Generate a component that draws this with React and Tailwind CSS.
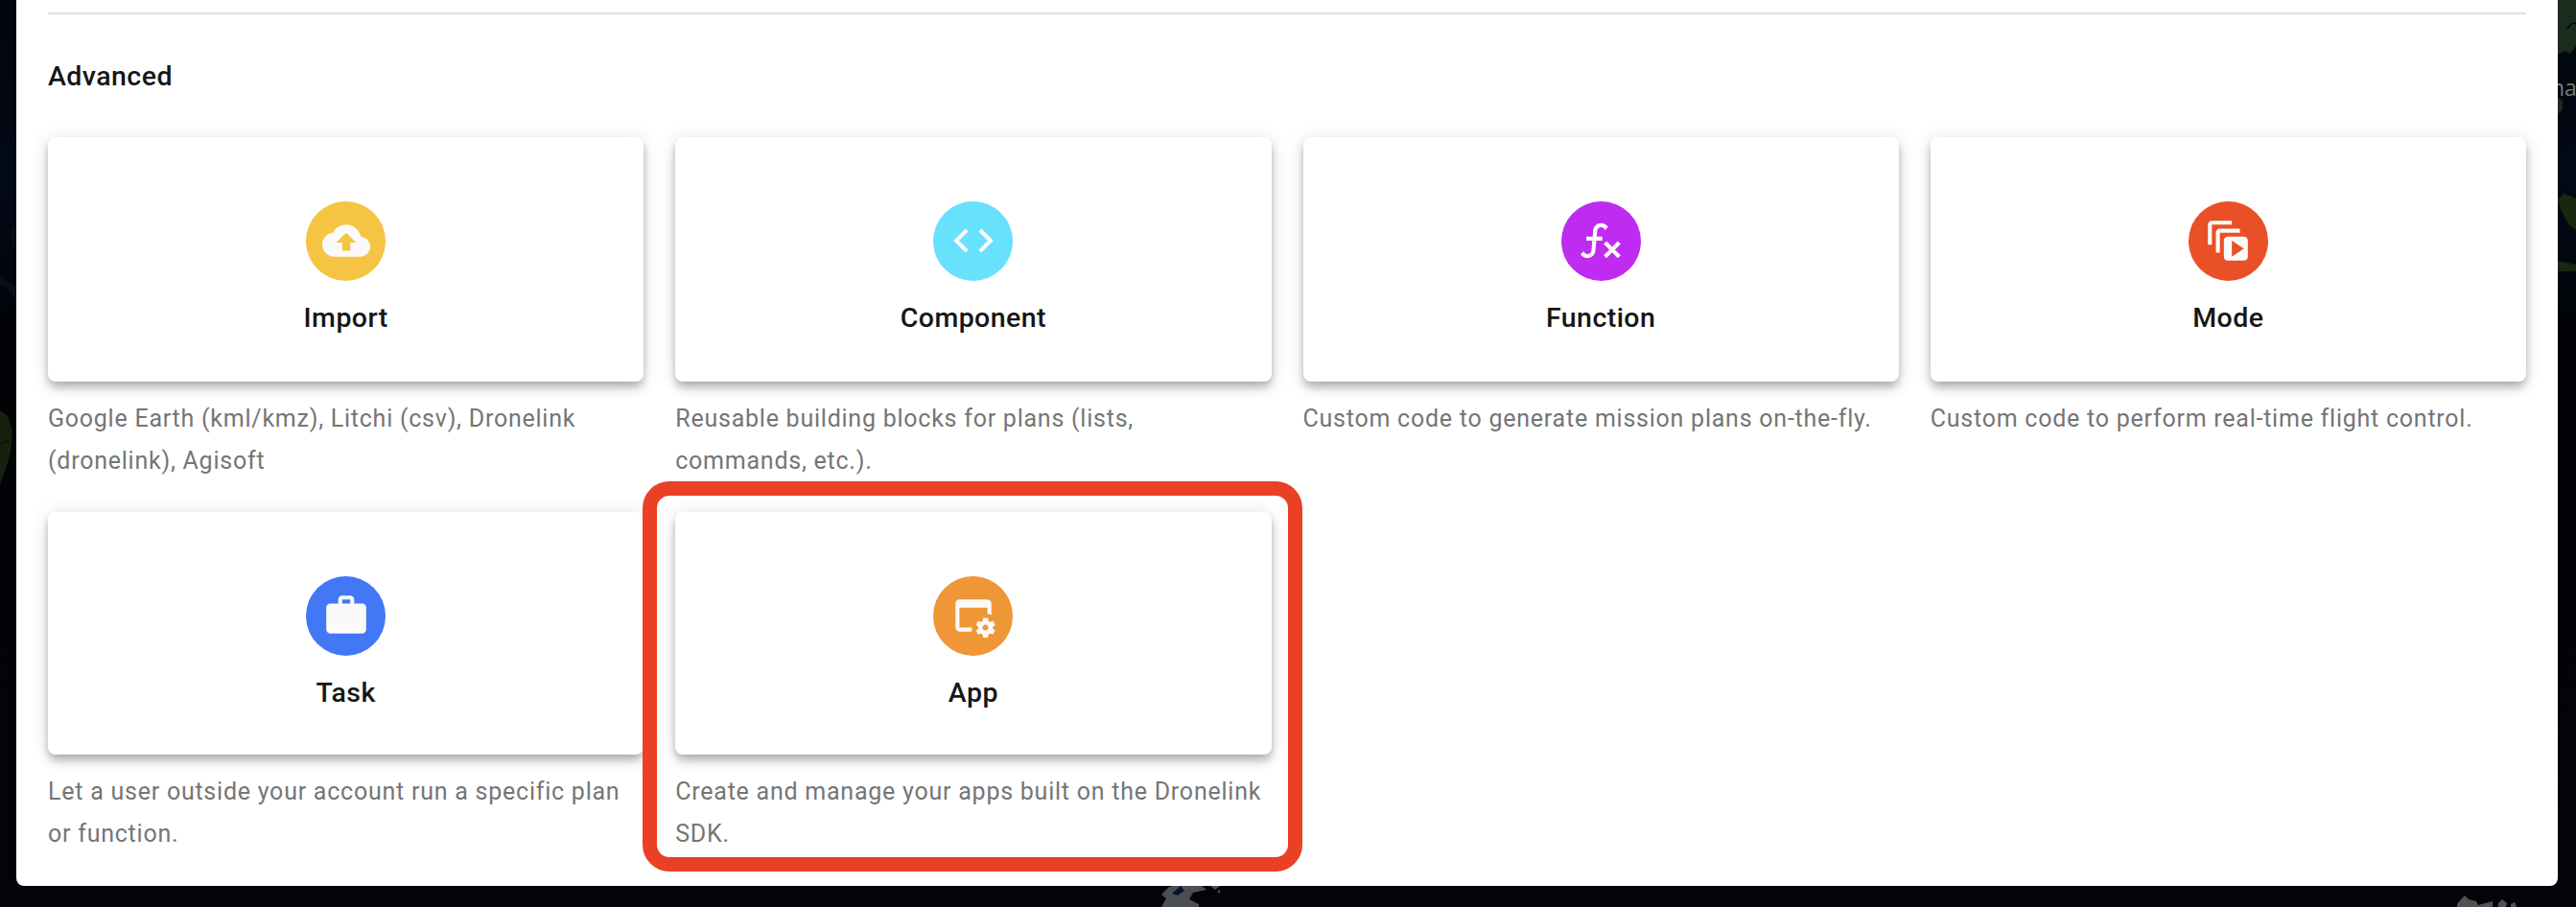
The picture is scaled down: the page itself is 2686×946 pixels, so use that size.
import React from 'react';
import { MdCloudUpload, MdCode } from 'react-icons/md';

const Glyph = ({ d }) => (
  <svg viewBox="0 0 24 24" className="h-[50px] w-[50px]" fill="currentColor" fillRule="evenodd">
    <path d={d} />
  </svg>
);

const functionPath =
  'M12.42,5.29C11.32,5.19 10.35,6 10.25,7.11L10,10H12.82V12H9.82L9.38,17.07C9.18,19.27 7.24,20.9 5.04,20.7C3.79,20.59 2.66,19.9 2,18.83L3.5,17.33C3.83,18.38 4.96,18.97 6,18.63C6.78,18.39 7.33,17.7 7.4,16.89L7.82,12H4.82V10H8L8.27,6.93C8.46,4.73 10.39,3.1 12.6,3.28C13.86,3.39 15,4.09 15.66,5.17L14.16,6.67C13.91,5.9 13.23,5.36 12.42,5.29M22,13.65L20.59,12.24L17.76,15.07L14.93,12.24L13.5,13.65L16.35,16.5L13.5,19.33L14.93,20.74L17.76,17.91L20.59,20.74L22,19.33L19.17,16.5L22,13.65Z';
const modePath =
  'M4 2C2.89 2 2 2.89 2 4V14H4V4H14V2H4M8 6C6.89 6 6 6.89 6 8V18H8V8H18V6H8M12 10C10.89 10 10 10.89 10 12V20C10 21.11 10.89 22 12 22H20C21.11 22 22 21.11 22 20V12C22 10.89 21.11 10 20 10H12M14 12L20 16L14 20V12Z';
const taskPath =
  'M10,2H14A2,2 0 0,1 16,4V6H20A2,2 0 0,1 22,8V19A2,2 0 0,1 20,21H4C2.89,21 2,20.1 2,19V8C2,6.89 2.89,6 4,6H8V4C8,2.89 8.89,2 10,2M14,6V4H10V6H14Z';
const appPath =
  'M21.7 18.6V17.6L22.8 16.8C22.9 16.7 23 16.6 22.9 16.5L21.9 14.8C21.9 14.7 21.7 14.7 21.6 14.7L20.4 15.2C20.1 15 19.8 14.8 19.5 14.7L19.3 13.4C19.3 13.3 19.2 13.2 19.1 13.2H17.1C16.9 13.2 16.8 13.3 16.8 13.4L16.6 14.7C16.3 14.9 16.1 15 15.8 15.2L14.6 14.7C14.5 14.7 14.4 14.7 14.3 14.8L13.3 16.5C13.3 16.6 13.3 16.7 13.4 16.8L14.5 17.6V18.6L13.4 19.4C13.3 19.5 13.2 19.6 13.3 19.7L14.3 21.4C14.4 21.5 14.5 21.5 14.6 21.5L15.8 21C16 21.2 16.3 21.4 16.6 21.5L16.8 22.8C16.9 22.9 17 23 17.1 23H19.1C19.2 23 19.3 22.9 19.3 22.8L19.5 21.5C19.8 21.3 20 21.2 20.3 21L21.5 21.4C21.6 21.4 21.7 21.4 21.8 21.3L22.8 19.6C22.9 19.5 22.9 19.4 22.8 19.4L21.7 18.6M18 19.5C17.2 19.5 16.5 18.8 16.5 18S17.2 16.5 18 16.5 19.5 17.2 19.5 18 18.8 19.5 18 19.5M11.3 18H5V8H19V11.1C19.7 11.2 20.4 11.4 21 11.7V6C21 4.9 20.1 4 19 4H5C3.9 4 3 4.9 3 6V18C3 19.1 3.9 20 5 20H11.3C11.1 19.4 11 18.7 11.3 18Z';

const items = [
  {
    title: 'Import',
    color: 'bg-[#f5c443]',
    icon: <MdCloudUpload size={50} />,
    text: 'Google Earth (kml/kmz), Litchi (csv), Dronelink (dronelink), Agisoft',
  },
  {
    title: 'Component',
    color: 'bg-[#68e1fd]',
    icon: <MdCode size={50} />,
    text: 'Reusable building blocks for plans (lists, commands, etc.).',
  },
  {
    title: 'Function',
    color: 'bg-[#c02bf1]',
    icon: <Glyph d={functionPath} />,
    text: 'Custom code to generate mission plans on-the-fly.',
  },
  {
    title: 'Mode',
    color: 'bg-[#ea5027]',
    icon: <Glyph d={modePath} />,
    text: 'Custom code to perform real-time flight control.',
  },
  {
    title: 'Task',
    color: 'bg-[#4278f6]',
    icon: <Glyph d={taskPath} />,
    text: 'Let a user outside your account run a specific plan or function.',
    height: 'h-[253px]',
  },
  {
    title: 'App',
    color: 'bg-[#ef9636]',
    icon: <Glyph d={appPath} />,
    text: 'Create and manage your apps built on the Dronelink SDK.',
    height: 'h-[253px]',
    highlighted: true,
  },
];

const Card = ({ title, color, icon, text, height = 'h-[255px]', highlighted }) => (
  <div className="relative h-[391px]">
    <div
      className={`flex flex-col items-center rounded-[8px] bg-white pt-[66.5px] shadow-[0_4px_8px_-2px_rgba(0,0,0,0.2),0_8px_10px_0_rgba(0,0,0,0.14),0_2px_20px_0_rgba(0,0,0,0.12)] ${height}`}
    >
      <div className={`flex h-[83px] w-[83px] items-center justify-center rounded-full text-[#fafafa] ${color}`}>
        {icon}
      </div>
      <h3 className="mt-[18.5px] text-[28.5px] leading-[42px] font-medium tracking-[0.45px] text-[#161616]">{title}</h3>
    </div>
    <p className="mt-[17px] text-[25px] leading-[43.5px] tracking-[0.76px] text-[#757575]">{text}</p>
    {highlighted && (
      <div className="pointer-events-none absolute -top-8 -left-[34px] h-[407px] w-[688px] rounded-[28px] border-[15.5px] border-[#ea4026]" />
    )}
  </div>
);

// Night map visible around the edges of the dialog
const MapBackdrop = () => (
  <div className="absolute inset-0 overflow-hidden">
    <svg viewBox="0 0 2686 946" className="h-full w-full">
      <defs>
        <linearGradient id="sea" x1="0" y1="0" x2="0" y2="1">
          <stop offset="0" stopColor="#02050b" />
          <stop offset="0.2" stopColor="#030917" />
          <stop offset="0.36" stopColor="#010307" />
          <stop offset="1" stopColor="#020409" />
        </linearGradient>
      </defs>
      <rect width="2686" height="946" fill="url(#sea)" />
      <path d="M17 236L10 242L15 256L17 258ZM0 288L8 294L17 300V312L8 302L0 297Z" fill="#080f1c" />
      <path d="M0 428L8 434L13 450L11 472L5 492L0 506Z" fill="#18200d" />
      <path d="M0 463L8 460L13 464" fill="none" stroke="#050704" />
      <path d="M2667 0H2686V48L2680 56L2674 53L2667 57ZM2667 101L2672 105V114L2667 119Z" fill="#1b2b1d" />
      <path d="M2667 208L2673 202L2686 206V240L2678 234L2670 218ZM2667 272L2686 276V283H2667Z" fill="#192610" />
      <path d="M2677 30L2681 25L2686 24M2677 195L2678 202L2686 206" fill="none" stroke="#030504" strokeWidth="1.5" />
      <path d="M1211 933L1219 925L1228 923H1252L1258 928L1244 931L1240 938L1250 943V946H1211L1216 937ZM1262 924H1272L1267 928ZM1269 930L1272 928V932Z" fill="#4b4f53" />
      <path d="M1231 924L1235 929L1228 934L1222 932Z" fill="#0b1030" />
      <path d="M2562 943L2566 938L2570 934L2574 938L2582 940L2584 944L2599 940V946H2562ZM2605 942L2609 938L2614 942L2613 946H2605ZM2618 943L2622 941L2624 946H2618Z" fill="#505153" />
    </svg>
    <span className="absolute top-[75px] left-[2660px] font-['Open_Sans',sans-serif] text-[23px] leading-[33px] text-[#77797b]">
      na
    </span>
  </div>
);

const App = () => {
  return (
    <div className="relative h-[946px] w-full overflow-hidden bg-[#020409] pr-[19px] pl-[17px] font-[Roboto,sans-serif]">
      <MapBackdrop />
      <main className="relative h-[924px] rounded-b-[8px] bg-white px-[33px] pt-[13px]">
        <hr className="border-t-2 border-[#e0e0e0]" />
        <h2 className="mt-[44px] text-[28.5px] leading-[42px] font-medium tracking-[0.45px] text-[#161616]">Advanced</h2>
        <div className="mt-[42px] grid grid-cols-4 gap-x-[33px]">
          {items.map((item) => (
            <Card key={item.title} {...item} />
          ))}
        </div>
      </main>
    </div>
  );
};

export default App;
